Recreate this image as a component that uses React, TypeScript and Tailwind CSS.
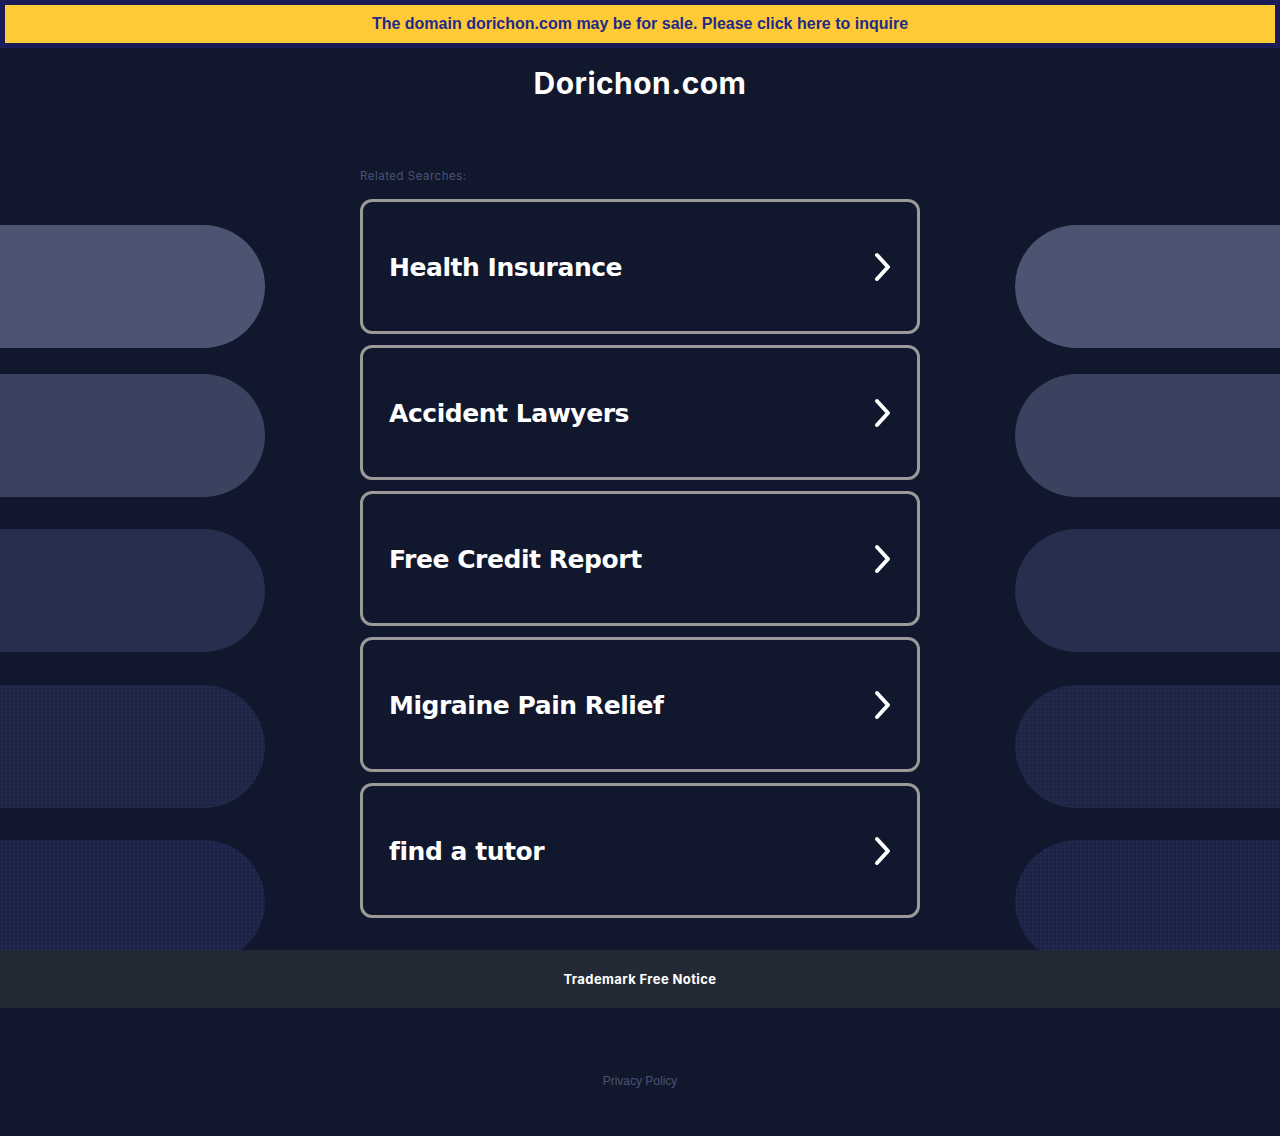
import React from "react";

const items = [
  "Health Insurance",
  "Accident Lawyers",
  "Free Credit Report",
  "Migraine Pain Relief",
  "find a tutor",
];

const pills = [
  { mt: "mt-[85px]", bg: "bg-[#4b5572]" },
  { mt: "mt-[26px]", bg: "bg-[#39425f]" },
  { mt: "mt-[32px]", bg: "bg-[#262f4d]" },
  { mt: "mt-[33px]", bg: "bg-[#1d2645] bg-[radial-gradient(#222c50_0.8px,transparent_0.8px)] bg-[length:4px_4px]" },
  { mt: "mt-[32px]", bg: "bg-[#1b2447] bg-[radial-gradient(#222b52_0.8px,transparent_0.8px)] bg-[length:4px_4px]" },
];

function Chevron() {
  return (
    <svg width="18" height="30" viewBox="0 0 18 30" fill="none">
      <polyline
        points="3,3 14,15 3,27"
        stroke="white"
        strokeWidth="4"
        strokeLinecap="round"
        strokeLinejoin="round"
      />
    </svg>
  );
}

export default function App() {
  return (
    <div className="min-h-[1136px] bg-[#11172c] flex flex-col">
      <div className="h-12 bg-[#1a1c58] p-[5px]">
        <div className="h-[38px] bg-[#ffca36] flex items-center justify-center">
          <span className="font-['Liberation_Sans',Arial,sans-serif] font-bold text-[16px] text-[#1e2a8a]">
            The domain dorichon.com may be for sale. Please click here to inquire
          </span>
        </div>
      </div>

      <div className="pt-[17px] h-[92px] text-center">
        <h1 className="font-['Inter',sans-serif] font-bold text-[30px] leading-[36px] text-white tracking-[0.45px]">
          Dorichon.com
        </h1>
      </div>

      <div className="flex h-[810px] overflow-hidden">
        <div className="w-[265px] flex flex-col">
          {pills.map((p, i) => (
            <div key={i} className={`${p.mt} h-[123px] shrink-0 rounded-r-full ${p.bg}`} />
          ))}
        </div>

        <div className="w-[560px] mx-[95px] pt-[28px]">
          <div className="font-['Inter',sans-serif] text-[11.5px] tracking-[0.5px] leading-4 text-[#4a5474] mb-[15px]">
            Related Searches:
          </div>
          <div className="flex flex-col gap-[11px]">
            {items.map((t) => (
              <div
                key={t}
                className="h-[135px] border-[3px] border-[#9a9a9a] rounded-[12px] flex items-center justify-between pl-[26px] pr-[25px]"
              >
                <span className="font-['DejaVu_Sans',Verdana,sans-serif] font-bold text-[25px] tracking-[-0.45px] text-white pt-[2px]">
                  {t}
                </span>
                <Chevron />
              </div>
            ))}
          </div>
        </div>

        <div className="w-[265px] flex flex-col">
          {pills.map((p, i) => (
            <div key={i} className={`${p.mt} h-[123px] shrink-0 rounded-l-full ${p.bg}`} />
          ))}
        </div>
      </div>

      <div className="h-[58px] bg-[#232a35] flex items-center justify-center">
        <span className="font-['Inter',sans-serif] font-bold text-[13px] tracking-[0.4px] text-white pt-[1px]">
          Trademark Free Notice
        </span>
      </div>

      <div className="pt-[59px] text-center">
        <span className="font-['Liberation_Sans',Arial,sans-serif] text-[12px] leading-4 text-[#4a5474]">
          Privacy Policy
        </span>
      </div>
    </div>
  );
}
